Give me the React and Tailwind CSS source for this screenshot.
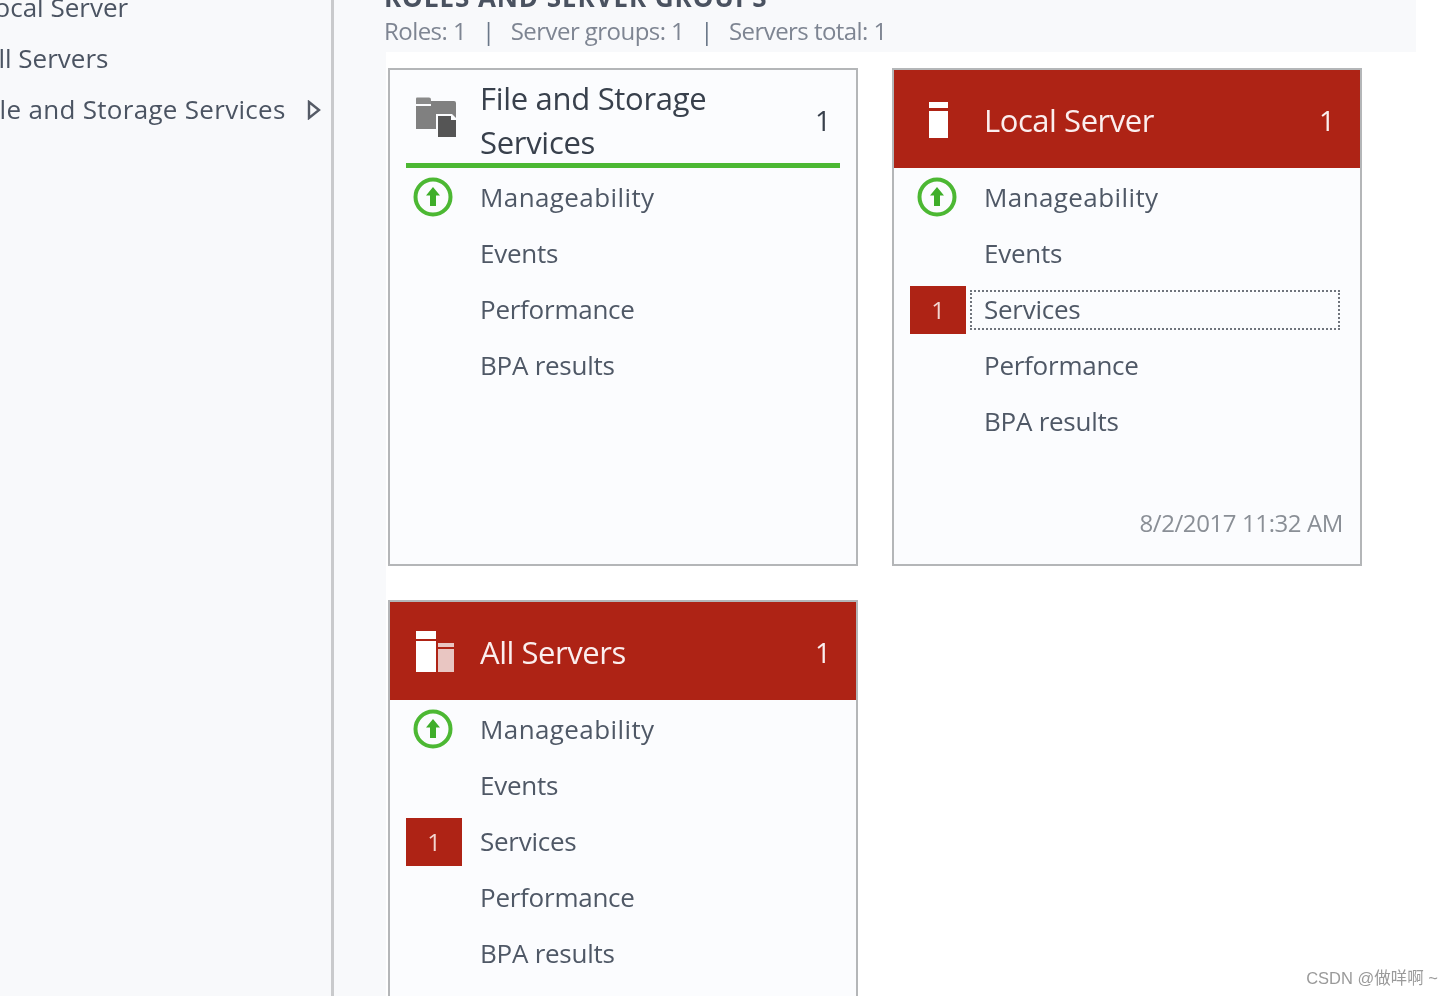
import React from 'react';

const font = { fontFamily: '"Open Sans", "Liberation Sans", sans-serif' };

const UpIcon = () => (
  <svg width="42" height="42" viewBox="0 0 42 42" fill="none">
    <circle cx="21" cy="21" r="17.5" stroke="#4cb833" strokeWidth="4" />
    <path d="M21 11 L28 19.5 H24 V30 H18 V19.5 H14 Z" fill="#3fae2a" />
  </svg>
);

const FolderIcon = () => (
  <svg className="-mt-1" width="42" height="42" viewBox="0 0 42 42">
    <path d="M1 0.5 H13 Q15 0.5 15 2.5 V7 H0 V1.5 Q0 0.5 1 0.5 Z" fill="#8a8a8a" />
    <path d="M0 9 H15 V4 H38 Q40 4 40 6 V32 H0 Z" fill="#808080" />
    <path d="M20 17 H36 L42 23 V41 H20 Z" fill="#fbfcfe" />
    <path d="M22 19 H35 V23 H40 V40 H22 Z" fill="#555555" />
  </svg>
);

const ServerIcon = () => (
  <svg className="ml-[9px]" width="20" height="36" viewBox="0 0 20 36">
    <rect width="19" height="6" fill="#fff" />
    <rect y="9" width="19" height="27" fill="#fff" />
  </svg>
);

const ServersIcon = () => (
  <svg width="40" height="42" viewBox="0 0 40 42">
    <rect width="20" height="8" fill="#fff" />
    <rect y="10" width="20" height="31" fill="#fff" />
    <rect x="22" y="12" width="16" height="4" fill="#e9c6c2" />
    <rect x="22" y="18" width="16" height="23" fill="#e9c6c2" />
  </svg>
);

const Row = ({ label, count, status, focused }) => (
  <div className="flex h-14 items-center">
    <div className="flex w-14 shrink-0 items-center justify-center">
      {status && <div className="-mt-0.5 -ml-0.5"><UpIcon /></div>}
      {count && (
        <div className="flex h-12 w-14 items-center justify-center bg-[#ae2315] text-[24px] text-[#f3d5d0]">
          {count}
        </div>
      )}
    </div>
    <div
      className={
        focused
          ? 'ml-1 flex h-10 w-[370px] items-center border-2 border-dotted border-[#6f747c] pl-3 text-[26px] tracking-[-0.25px] text-[#4f5866]'
          : 'ml-[18px] pb-0.5 text-[26px] tracking-[-0.25px] text-[#4f5866]'
      }
    >
      <span className={status ? 'tracking-[0.4px]' : focused ? 'pb-0.5' : ''}>{label}</span>
    </div>
  </div>
);

const Card = ({ title, count, icon, alert, rows, date }) => (
  <div className="relative flex h-[498px] flex-col border-2 border-[#b4b6b8] bg-[#fbfcfe]">
    {alert ? (
      <div className="flex h-[98px] shrink-0 items-center bg-[#ae2315] pt-0.5 pr-[25px] pl-[26px] text-[#fbeeee]">
        <div className="flex w-[64px] shrink-0 justify-start">{icon}</div>
        <div className="flex-1 text-[31px] tracking-[-0.45px]">{title}</div>
        <div className="text-[28px] font-medium">{count}</div>
      </div>
    ) : (
      <div className="mx-4 flex h-[98px] shrink-0 items-center border-b-[5px] border-[#4cb833] pt-1.5 pr-[9px] pl-2.5 text-[#38404c]">
        <div className="flex w-[64px] shrink-0 justify-start">{icon}</div>
        <div className="w-[280px] flex-1 text-[31px] leading-[44px] tracking-[-0.3px]">{title}</div>
        <div className="text-[28px] font-medium">{count}</div>
      </div>
    )}
    <div className="flex flex-col px-4 pt-0.5">
      {rows.map((r) => (
        <Row key={r.label} {...r} />
      ))}
    </div>
    {date && (
      <div className="mt-auto pr-[17px] pb-[23px] text-right text-[24px] tracking-[-0.4px] text-[#8a8f96]">{date}</div>
    )}
  </div>
);

export default function App() {
  return (
    <div className="relative flex h-[996px] w-[1454px] overflow-hidden bg-white blur-[0.6px]" style={font}>
      <aside className="h-full w-[334px] shrink-0 overflow-hidden border-r-[3px] border-[#c9cacc] bg-[#f8f9fb]">
        <ul className="-mt-[18px] text-[26px] text-[#4b5462]">
          <li className="flex h-[51px] items-center -ml-[19px]">Local Server</li>
          <li className="flex h-[51px] items-center -ml-[18px]">All Servers</li>
          <li className="flex h-[51px] items-center justify-between -ml-[21px] pr-[10px] tracking-[0.3px]">
            File and Storage Services
            <svg width="14" height="20" viewBox="0 0 14 20" fill="none">
              <path d="M2 2 L12 10 L2 18 Z" stroke="#555b66" strokeWidth="2.4" />
            </svg>
          </li>
        </ul>
      </aside>

      <main className="flex min-w-0 flex-1 flex-col">
        <header className="h-[52px] w-[1082px] shrink-0 overflow-hidden bg-[#f8f9fb] pl-[50px]">
          <div className="-mt-[16px] h-[26px] text-[26px] leading-[26px] font-bold tracking-[0.95px] whitespace-nowrap text-[#4a5260] uppercase">
            Roles and Server Groups
          </div>
          <div className="mt-1.5 flex items-center text-[24px] leading-[30px] tracking-[-0.55px] text-[#7e8592]">
            <span>Roles: 1</span>
            <span className="mx-[16px] text-[#6a7788]">|</span>
            <span>Server groups: 1</span>
            <span className="mx-[16px] text-[#6a7788]">|</span>
            <span>Servers total: 1</span>
          </div>
        </header>
        <div className="flex flex-1">
          <div className="w-[52px] shrink-0 bg-[#f8f9fb]"></div>
          <div className="flex-1 pt-4 pl-0.5">
            <div className="grid grid-cols-[470px_470px] gap-[34px]">
              <Card
                title="File and Storage Services"
                count="1"
                icon={<FolderIcon />}
                rows={[{ label: 'Manageability', status: true }, { label: 'Events' }, { label: 'Performance' }, { label: 'BPA results' }]}
              />
              <Card
                title="Local Server"
                count="1"
                alert
                icon={<ServerIcon />}
                date="8/2/2017 11:32 AM"
                rows={[
                  { label: 'Manageability', status: true },
                  { label: 'Events' },
                  { label: 'Services', count: '1', focused: true },
                  { label: 'Performance' },
                  { label: 'BPA results' },
                ]}
              />
              <Card
                title="All Servers"
                count="1"
                alert
                icon={<ServersIcon />}
                rows={[
                  { label: 'Manageability', status: true },
                  { label: 'Events' },
                  { label: 'Services', count: '1' },
                  { label: 'Performance' },
                  { label: 'BPA results' },
                ]}
              />
            </div>
          </div>
        </div>
      </main>

      <div
        className="absolute right-[16px] bottom-[7px] text-[16.5px] leading-[22px] text-[#9a9a9a]"
        style={{ fontFamily: '"Liberation Sans", "Noto Sans CJK SC", sans-serif' }}
      >
        CSDN @做咩啊 ~
      </div>
    </div>
  );
}
